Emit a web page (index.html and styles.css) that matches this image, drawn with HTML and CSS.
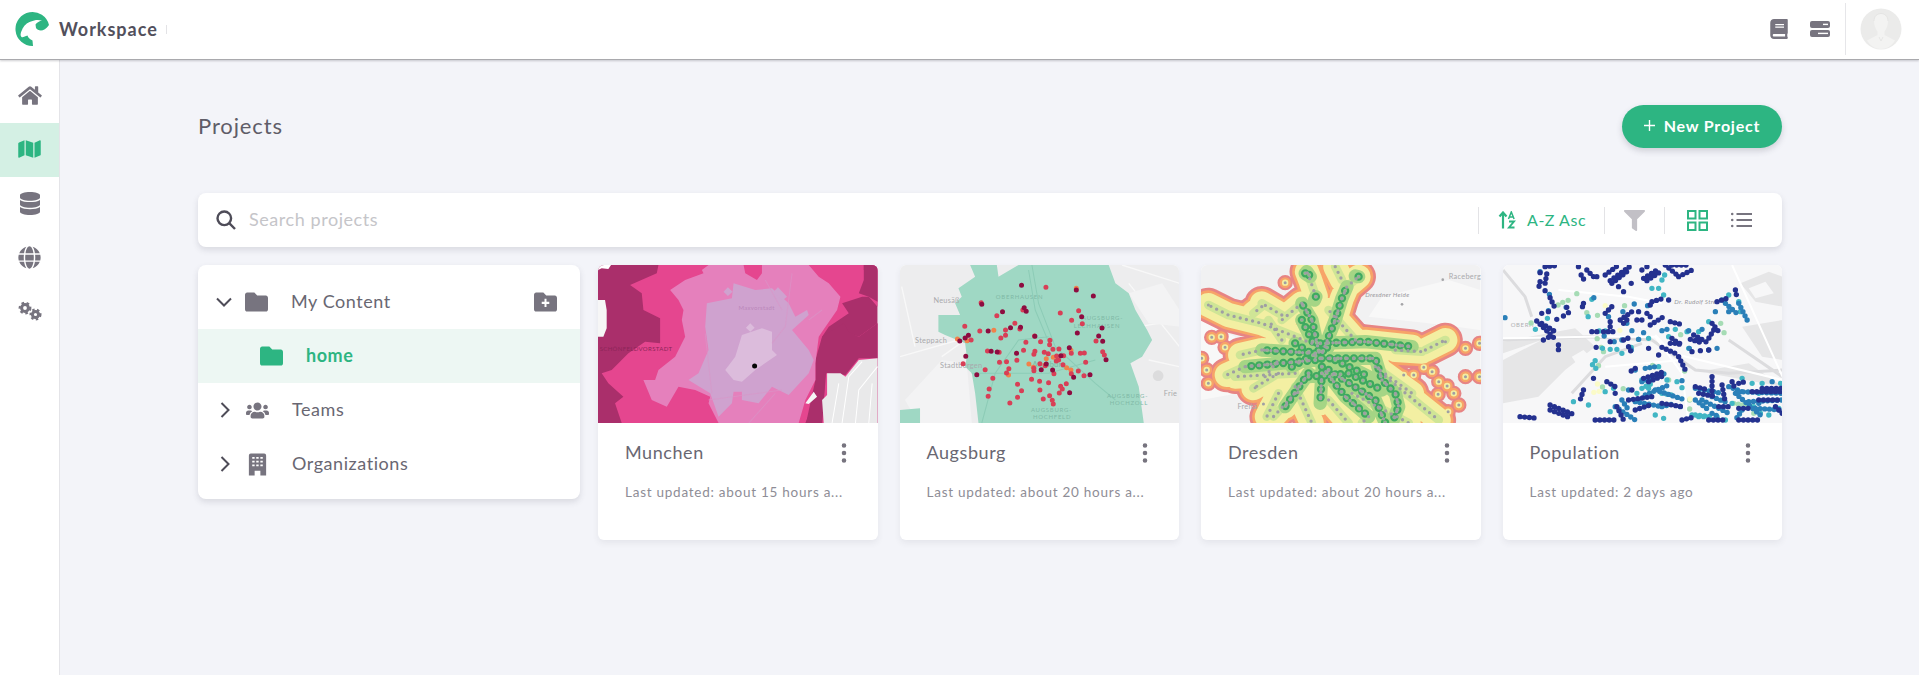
FILE: index.html
```
<!DOCTYPE html>
<html lang="en">
<head>
<meta charset="utf-8">
<title>Workspace</title>
<link rel="stylesheet" href="styles.css">
</head>
<body>
<svg class="defs" width="0" height="0" aria-hidden="true">
  <defs>
    <path id="i-folder" d="M464 128H272l-64-64H48C21.49 64 0 85.49 0 112v288c0 26.51 21.49 48 48 48h416c26.51 0 48-21.49 48-48V176c0-26.51-21.49-48-48-48z"/>
    <path id="net" d="M375 295L420 180L440 115L455 80L490 50M375 295L350 180L320 130M362 110L345 60L335 35M375 250L510 245L650 260M690 270L750 240M380 295L540 295L560 360L600 400L610 440L590 489M380 320L450 410L520 470M400 330L540 420L570 489M360 300L150 320M360 280L200 270M350 250L200 190L100 165L40 135M340 340L270 440M380 340L375 430M300 340L120 350M420 20L440 60M570 350L680 440L730 480M470 400L640 489M250 400L215 470M200 270L135 285M150 320L95 345M250 340L175 385M300 400L235 470M260 165L200 130M320 130L260 180M600 270L680 275M300 380L350 489M400 420L460 489M520 470L500 489M200 140L175 160M540 320L650 400M480 240L400 150M260 240L220 180M210 350L250 300"/>
    <path id="core" d="M375 295L420 180L440 115L455 80M375 295L350 180L320 130M375 250L510 245L650 260M380 295L540 295L560 360L600 400L610 440L590 489M380 320L450 410L520 470M400 330L540 420L570 489M360 300L150 320M360 280L200 270M340 340L270 440M380 340L375 430M300 250L380 300M320 180L360 260M290 320L400 260M340 350L470 340M420 300L520 350M460 340L560 390M330 40L345 50L335 35M490 50L480 48M362 110L358 120"/>
    <path id="rings" d="M270 68h.1M810 265h.1M790 435h.1M40 370h.1M90 262h.1M50 232h.1M78 230h.1M20 295h.1M35 330h.1M852 350h.1M852 250h.1M685 322h.1M710 335h.1M625 345h.1M655 345h.1M730 365h.1M755 378h.1M775 400h.1M728 403h.1M758 455h.1M810 350h.1M180 383h.1M205 432h.1M40 135h.1M750 245h.1"/>
  </defs>
</svg>

<header class="topbar">
  <div class="brand">
    <svg class="logo" viewBox="0 0 36 36">
      <path class="fill-green" d="M35 14A17 17 0 1 0 19 35L18.500 29.500C15 28 14 26 13.500 24.500C11 25 9 27 7.500 26C6 25 6.500 22 8 19C9.500 15 13 11.500 17 10.500C20 9 24 8.500 28 9.500C25.500 10 23 11.500 21.500 13.500L22 17C24 20 30 21.500 35 14Z"/>
    </svg>
    <span class="brand-name">Workspace</span>
    <span class="brand-tick"></span>
  </div>
  <div class="top-actions">
    <svg class="top-book" viewBox="0 0 448 512"><path class="fill-grey" d="M448 360V24c0-13.300-10.700-24-24-24H96C43 0 0 43 0 96v320c0 53 43 96 96 96h328c13.300 0 24-10.700 24-24v-16c0-7.500-3.500-14.300-8.900-18.700-4.200-15.400-4.200-59.300 0-74.700 5.400-4.300 8.900-11.100 8.900-18.600zM128 134c0-3.300 2.700-6 6-6h212c3.300 0 6 2.700 6 6v20c0 3.300-2.700 6-6 6H134c-3.300 0-6-2.700-6-6v-20zm0 64c0-3.300 2.700-6 6-6h212c3.300 0 6 2.700 6 6v20c0 3.300-2.700 6-6 6H134c-3.300 0-6-2.700-6-6v-20zm253.400 250H96c-17.700 0-32-14.300-32-32 0-17.600 14.400-32 32-32h285.400c-1.900 17.100-1.900 46.900 0 64z"/></svg>
    <svg class="top-server" viewBox="0 0 20 16">
      <rect class="fill-grey" x="0" y="0" width="20" height="7" rx="2"/>
      <rect class="fill-grey" x="0" y="9" width="20" height="7" rx="2"/>
      <rect class="fill-white" x="13" y="2.700" width="5" height="1.400"/>
      <rect class="fill-white" x="8" y="11.700" width="10" height="1.400"/>
    </svg>
    <span class="top-divider"></span>
    <svg class="avatar" viewBox="0 0 42 42">
      <circle class="avatar-bg" cx="21" cy="21" r="20.500"/>
      <path class="avatar-fg" d="M21 6c-4.500 0-7 3-7 7.500 0 4 2 8 3.500 10V27L7 32.500c3 5 8.500 8.500 14 8.500s11-3.500 14-8.500L24.500 27v-3.500C26 21.500 28 17.500 28 13.500 28 9 25.500 6 21 6z"/>
      <path class="avatar-line" d="M14 13C14 3 28 3 28 13M19 29L21 33L23 29"/>
    </svg>
  </div>
</header>

<div class="shell">
  <nav class="sidebar">
    <a class="nav-item"><svg class="nav-home" viewBox="0 0 576 512"><path class="fill-grey" d="M280.370 148.260L96 300.110V464a16 16 0 0 0 16 16l112.060-.29a16 16 0 0 0 15.920-16V368a16 16 0 0 1 16-16h64a16 16 0 0 1 16 16v95.640a16 16 0 0 0 16 16.050L464 480a16 16 0 0 0 16-16V300L295.670 148.260a12.190 12.190 0 0 0-15.300 0zM571.600 251.470L488 182.560V44.050a12 12 0 0 0-12-12h-56a12 12 0 0 0-12 12v72.610L318.470 43a48 48 0 0 0-61 0L4.340 251.470a12 12 0 0 0-1.600 16.900l25.500 31A12 12 0 0 0 45.150 301l235.220-193.740a12.190 12.190 0 0 1 15.300 0L530.900 301a12 12 0 0 0 16.900-1.600l25.500-31a12 12 0 0 0-1.700-16.930z"/></svg></a>
    <a class="nav-item nav-active"><svg class="nav-map" viewBox="0 0 576 512"><path class="fill-green" d="M0 117.660v346.320c0 11.320 11.430 19.060 21.940 14.860L160 416V32L20.120 87.950A32.006 32.006 0 0 0 0 117.660zM192 416l192 64V96L192 32v384zM554.060 33.160L416 96v384l139.880-55.950A31.996 31.996 0 0 0 576 394.340V48.020c0-11.320-11.430-19.060-21.940-14.860z"/></svg></a>
    <a class="nav-item"><svg class="nav-db" viewBox="0 0 448 512"><path class="fill-grey" d="M448 73.143v45.714C448 159.143 347.667 192 224 192S0 159.143 0 118.857V73.143C0 32.857 100.333 0 224 0s224 32.857 224 73.143zM448 176v102.857C448 319.143 347.667 352 224 352S0 319.143 0 278.857V176c48.125 33.143 136.208 48.572 224 48.572S399.874 209.143 448 176zm0 160v102.857C448 479.143 347.667 512 224 512S0 479.143 0 438.857V336c48.125 33.143 136.208 48.572 224 48.572S399.874 369.143 448 336z"/></svg></a>
    <a class="nav-item"><svg class="nav-globe" viewBox="0 0 496 512"><path class="fill-grey" d="M336.500 160C322 70.700 287.800 8 248 8s-74 62.700-88.500 152h177zM152 256c0 22.200 1.200 43.500 3.300 64h185.300c2.100-20.500 3.300-41.800 3.300-64s-1.200-43.500-3.300-64H155.300c-2.100 20.500-3.300 41.800-3.300 64zm324.700-96c-28.600-67.900-86.500-120.400-158-141.600 24.400 33.800 41.200 84.700 50 141.600h108zM177.200 18.400C105.800 39.600 47.800 92.100 19.300 160h108c8.700-56.900 25.500-107.800 49.900-141.600zM487.400 192H372.700c2.100 21 3.300 42.500 3.300 64s-1.200 43-3.300 64h114.600c5.500-20.500 8.600-41.800 8.600-64s-3.100-43.500-8.500-64zM120 256c0-21.500 1.200-43 3.300-64H8.600C3.200 212.500 0 233.800 0 256s3.200 43.500 8.600 64h114.600c-2-21-3.200-42.500-3.200-64zm39.500 96c14.500 89.300 48.700 152 88.500 152s74-62.700 88.500-152h-177zm159.300 141.600c71.400-21.200 129.400-73.700 158-141.600h-108c-8.800 56.900-25.600 107.800-50 141.600zM19.300 352c28.600 67.900 86.500 120.400 158 141.600-24.400-33.800-41.200-84.700-50-141.600h-108z"/></svg></a>
    <a class="nav-item"><svg class="nav-cogs" viewBox="0 0 24 20">
      <g class="cog"><circle cx="7" cy="7" r="3.400"/><circle class="cog-teeth" cx="7" cy="7" r="5.300"/></g>
      <g class="cog"><circle cx="17.500" cy="13.500" r="3.100"/><circle class="cog-teeth cog-teeth-b" cx="17.500" cy="13.500" r="4.900"/></g>
    </svg></a>
  </nav>

  <main class="main">
    <div class="page-head">
      <h1 class="page-title">Projects</h1>
      <button class="new-btn"><svg class="plus" viewBox="0 0 12 12"><path d="M6 0v12M0 6h12"/></svg>New Project</button>
    </div>

    <div class="toolbar">
      <svg class="search-icon" viewBox="0 0 20 20"><circle cx="8.300" cy="8.300" r="6.800"/><path d="M13.200 13.200L19 19"/></svg>
      <span class="search-ph">Search projects</span>
      <span class="tool-div"></span>
      <div class="sort">
        <svg class="sort-icon" viewBox="0 0 17 18">
          <path class="stroke-green" d="M4.500 17.500V2M1 5.500L4.500 1.500L8 5.500"/>
          <path class="stroke-green thin" d="M10 8L12.800 1L15.600 8M11 6h3.600"/>
          <path class="stroke-green mid" d="M10.500 10.500h5L10.500 16.500h5.500"/>
        </svg>
        <span class="sort-label">A-Z Asc</span>
      </div>
      <span class="tool-div div-filter"></span>
      <svg class="filter-icon" viewBox="0 0 512 512"><path d="M487.976 0H24.028C2.710 0-8.047 25.866 7.058 40.971L192 225.941V432c0 7.831 3.821 15.170 10.237 19.662l80 55.980C298.020 518.690 320 507.493 320 487.980V225.941l184.947-184.970C520.021 25.896 509.338 0 487.976 0z"/></svg>
      <span class="tool-div div-views"></span>
      <svg class="grid-icon" viewBox="0 0 21 21"><rect x="1" y="1" width="7.500" height="7.500"/><rect x="12.500" y="1" width="7.500" height="7.500"/><rect x="1" y="12.500" width="7.500" height="7.500"/><rect x="12.500" y="12.500" width="7.500" height="7.500"/></svg>
      <svg class="list-icon" viewBox="0 0 21 16"><path class="list-lines" d="M5.500 2H21M5.500 8H21M5.500 14H21"/><path class="list-dots" d="M1.200 2h0M1.200 8h0M1.200 14h0"/></svg>
    </div>

    <div class="content">
      <aside class="tree">
        <div class="tree-row">
          <svg class="chev-down" viewBox="0 0 16 10"><path d="M1 1.500L8 8.500L15 1.500"/></svg>
          <svg class="tree-icon" viewBox="0 56 512 400" preserveAspectRatio="none"><use href="#i-folder" class="fill-grey"/></svg>
          <span class="tree-label">My Content</span>
          <svg class="tree-add" viewBox="0 56 512 400" preserveAspectRatio="none"><use href="#i-folder" class="fill-grey"/><path class="add-plus" d="M256 190v168M172 274h168"/></svg>
        </div>
        <div class="tree-row tree-home">
          <svg class="tree-icon" viewBox="0 56 512 400" preserveAspectRatio="none"><use href="#i-folder" class="fill-green"/></svg>
          <span class="tree-label-home">home</span>
        </div>
        <div class="tree-row">
          <svg class="chev-right" viewBox="0 0 10 16"><path d="M1.500 1L8.500 8L1.500 15"/></svg>
          <svg class="tree-icon" viewBox="0 0 640 512"><path class="fill-grey" d="M96 224c35.300 0 64-28.700 64-64s-28.700-64-64-64-64 28.700-64 64 28.700 64 64 64zm448 0c35.300 0 64-28.700 64-64s-28.700-64-64-64-64 28.700-64 64 28.700 64 64 64zm32 32h-64c-17.600 0-33.500 7.100-45.100 18.600 40.300 22.100 68.900 62 75.100 109.400h66c17.700 0 32-14.300 32-32v-32c0-35.300-28.700-64-64-64zm-256 0c61.900 0 112-50.100 112-112S381.900 32 320 32 208 82.100 208 144s50.100 112 112 112zm76.800 32h-8.300c-20.800 10-43.900 16-68.500 16s-47.600-6-68.500-16h-8.300C179.600 288 128 339.600 128 403.200V432c0 26.500 21.500 48 48 48h288c26.500 0 48-21.500 48-48v-28.800c0-63.600-51.600-115.200-115.200-115.200zm-223.700-13.400C161.500 263.100 145.600 256 128 256H64c-35.300 0-64 28.700-64 64v32c0 17.700 14.300 32 32 32h65.900c6.300-47.400 34.900-87.300 75.200-109.400z"/></svg>
          <span class="tree-label">Teams</span>
        </div>
        <div class="tree-row">
          <svg class="chev-right" viewBox="0 0 10 16"><path d="M1.500 1L8.500 8L1.500 15"/></svg>
          <svg class="tree-icon" viewBox="0 0 24 24">
            <path class="fill-grey" d="M3 2.500a2 2 0 0 1 2-2h14a2 2 0 0 1 2 2v21h-6V18.500H9v5H3z"/>
            <path class="bld-win" d="M6.500 5h2.500M10.700 5h2.500M15 5h2.500M6.500 9h2.500M10.700 9h2.500M15 9h2.500M6.500 13h2.500M10.700 13h2.500M15 13h2.500"/>
          </svg>
          <span class="tree-label">Organizations</span>
        </div>
      </aside>

      <section class="cards">
        <article class="card">
          <svg class="thumb" viewBox="9 15 837 474" preserveAspectRatio="none">
            <rect x="9" y="15" width="837" height="474" fill="#aa2f6b"/>
            <path fill="#e5468f" d="M190 15L185 40L105 75L140 100L145 150L195 175V250L150 245L100 280L50 330L20 340L40 370L85 410L60 430L80 489H630L660 420L680 230L700 200L760 160L740 130L800 110L820 110L846 140V190L790 230L750 215L700 240L680 489H846V15H830L805 30V15Z"/>
            <path fill="#aa2f6b" d="M680 230L745 190L760 215L790 230L846 190V295H790L750 345L690 340L680 489H632L660 360V300Z"/>
            <path fill="#aa2f6b" d="M805 15H846V125L820 110L790 100L805 60Z"/>
            <path fill="#e580bc" d="M320 30L340 15H445L450 40L485 60L500 40V15H640L670 50L700 70L735 110L725 150L680 215L670 230L660 310L660 360L630 420L610 489H370L340 430L345 410L300 390L250 380L215 440L170 420L145 360L180 360L190 330L240 290L270 230L260 180L265 150L250 120L225 90L270 60L325 40Z"/>
            <path fill="#cfa2cf" d="M335 130L410 115L415 70L480 90L530 85L580 130L600 170L635 150L640 165L590 210L640 270L655 300L640 340L580 405L530 380L490 430L440 420L440 395L415 395L410 430L370 470L345 400L280 360L310 340L340 270L330 200Z"/>
            <path fill="#cfa2cf" d="M385 95L398 82L412 95L398 108ZM535 95L548 82L575 110L560 122Z"/>
            <path fill="#dcbcdc" d="M440 225L500 205L530 215L530 270L545 285L480 330L440 365L415 360L390 330L420 290ZM452 203L465 190L478 203L465 215Z"/>
            <path class="road-pink" d="M330 220L350 400M590 40L570 200L530 250M340 420L560 390M640 180L680 150M510 60L560 150M460 490L540 400"/>
            <text class="maplabel mlp" x="430" y="150">Maxvorstadt</text>
            <text class="maplabel mld" x="14" y="272">SCHÖNFELDVORSTADT</text>
            <circle cx="478" cy="318" r="7.500" fill="#050505"/>
            <path fill="#e9e9ea" d="M695 340L735 340L750 350L790 300L846 295V489H685L680 420L695 405Z"/>
            <path class="road-white" d="M740 489L760 350L800 305M780 489L790 390L846 320M710 489L730 370M820 489L830 370"/>
            <path fill="#f6f6f6" d="M9 120H30L35 150V205L25 230H9ZM630 430L655 395L665 410L640 432Z"/>
            <path fill="#fff" d="M9 15H35L48 15L40 27L20 25L9 30Z"/>
          </svg>
          <div class="card-body">
            <div class="card-head"><span class="card-title">Munchen</span><svg class="kebab" viewBox="0 0 6 20"><path d="M3 2.500h0M3 10h0M3 17.500h0"/></svg></div>
            <p class="card-meta">Last updated: about 15 hours a...</p>
          </div>
        </article>

        <article class="card">
          <svg class="thumb" viewBox="15 15 837 474" preserveAspectRatio="none">
            <rect x="15" y="15" width="837" height="474" fill="#ededee"/>
            <path class="road-grey" d="M15 290L190 240M140 290L210 240M60 260L20 80M680 15L852 70M700 70L852 260M760 300L852 320M730 200L852 180"/>
            <path fill="#f3f3f4" d="M140 300L215 310L230 489H70L30 420ZM700 100L800 70L852 150V200L760 190Z"/>
            <path fill="#9fd8c4" d="M225 15H305L310 50L370 15H640L660 70L700 100L720 150L755 210L770 240L740 290L705 310L730 380L745 489H250L240 400L230 340L210 320L215 290L210 250L150 225L130 215V165L195 165L180 130L200 110L190 85L240 50ZM15 450L75 445V489H15Z"/>
            <path class="road-teal" d="M410 15L430 130L480 260L600 370L660 420M400 30L420 150L470 270M460 230L370 240L300 340L260 489M230 340L460 340L600 300"/>
            <circle cx="788" cy="347" r="16" fill="#dcdcdd"/>
            <text class="maplabel mlg" x="115" y="128">Neusäß</text>
            <text class="maplabel mlg" x="60" y="250">Steppach</text>
            <text class="maplabel mlg" x="135" y="323">Stadtbergen</text>
            <text class="maplabel mlg" x="805" y="407">Frie</text>
            <text class="maplabel mls" x="302" y="118">OBERHAUSEN</text>
            <text class="maplabel mls" x="560" y="180">AUGSBURG-</text>
            <text class="maplabel mls" x="535" y="203">LECHHAUSEN</text>
            <text class="maplabel mls" x="635" y="413">AUGSBURG-</text>
            <text class="maplabel mls" x="643" y="436">HOCHZOLL</text>
            <text class="maplabel mls" x="407" y="455">AUGSBURG-</text>
            <text class="maplabel mls" x="413" y="478">HOCHFELD</text>
            <text class="maplabel mlm" x="412" y="322">Augsburg</text>
            <path class="dot dot-o" d="M187 237h0M216 242h0M296 211h0M543 85h0M527 271h0M453 296h0M474 292h0M401 312h0M414 322h0M514 323h0M527 330h0M450 315h0M340 345h0"/>
            <path class="dot dot-r" d="M452 82h0M258 128h0M305 167h0M383 150h0M495 159h0M550 152h0M529 181h0M561 191h0M209 199h0M254 213h0M331 210h0M331 226h0M317 234h0M359 190h0M374 207h0M228 240h0M392 247h0M436 245h0M464 241h0M463 254h0M602 243h0M277 273h0M312 277h0M385 271h0M419 274h0M416 283h0M447 277h0M459 281h0M473 268h0M491 267h0M528 280h0M555 280h0M567 279h0M622 275h0M627 285h0M313 307h0M334 305h0M365 301h0M204 311h0M270 329h0M341 326h0M334 339h0M293 355h0M416 325h0M434 311h0M505 287h0M484 288h0M490 300h0M483 303h0M571 307h0M503 314h0M549 333h0M528 341h0M566 347h0M476 341h0M409 358h0M433 364h0M460 368h0M367 373h0M513 371h0M496 379h0M501 387h0M492 399h0M434 390h0M379 392h0M282 387h0M279 409h0M367 412h0M344 429h0M444 417h0M463 407h0M471 421h0M474 432h0M416 332h0M450 317h0M418 228h0"/>
            <path class="dot dot-d" d="M379 76h0M543 90h0M594 108h0M260 133h0M322 155h0M387 143h0M393 154h0M559 170h0M220 226h0M210 234h0M194 243h0M279 213h0M346 203h0M376 202h0M546 219h0M610 228h0M622 244h0M620 204h0M419 229h0M522 263h0M288 274h0M306 276h0M364 280h0M212 289h0M497 287h0M632 299h0M245 344h0M453 312h0M438 329h0M472 330h0M535 352h0M584 344h0M523 398h0"/>
          </svg>
          <div class="card-body">
            <div class="card-head"><span class="card-title">Augsburg</span><svg class="kebab" viewBox="0 0 6 20"><path d="M3 2.500h0M3 10h0M3 17.500h0"/></svg></div>
            <p class="card-meta">Last updated: about 20 hours a...</p>
          </div>
        </article>

        <article class="card">
          <svg class="thumb" viewBox="18 15 837 474" preserveAspectRatio="none">
            <rect x="18" y="15" width="837" height="474" fill="#f1f1f2"/>
            <path fill="#f8f8f8" d="M560 110L760 60L855 90V210L700 190L520 170ZM18 180L120 230L130 400L18 420Z"/>
            <g class="heat">
              <use href="#net" class="h-red"/>
              <use href="#rings" class="r-red"/>
              <use href="#net" class="h-orange"/>
              <use href="#rings" class="r-orange"/>
              <use href="#net" class="h-yellow"/>
              <use href="#rings" class="r-yellow"/>
              <use href="#net" class="h-pale"/>
              <use href="#core" class="h-lgreen"/>
              <use href="#core" class="h-green"/>
              <use href="#core" class="h-ring"/>
              <use href="#net" class="h-grey"/>
              <use href="#rings" class="r-grey"/>
              <use href="#core" class="h-grey2"/>
            </g>
            <text class="maplabel mli" x="510" y="112">Dresdner Heide</text>
            <text class="maplabel mlg" x="760" y="58">Raceberg</text>
            <text class="maplabel mlg" x="127" y="446">Freita</text>
            <circle cx="620" cy="133" r="4" fill="#a5a5a8"/>
            <circle cx="742" cy="59" r="4" fill="#a5a5a8"/>
          </svg>
          <div class="card-body">
            <div class="card-head"><span class="card-title">Dresden</span><svg class="kebab" viewBox="0 0 6 20"><path d="M3 2.500h0M3 10h0M3 17.500h0"/></svg></div>
            <p class="card-meta">Last updated: about 20 hours a...</p>
          </div>
        </article>

        <article class="card">
          <svg class="thumb" viewBox="24 15 837 474" preserveAspectRatio="none">
            <rect x="24" y="15" width="837" height="474" fill="#f7f7f8"/>
            <path fill="#e6e6e7" d="M24 245L240 205L300 260L210 330L130 410L24 430ZM735 70L820 35L861 50V140L780 125ZM740 200L861 180V300L800 290ZM640 330L760 310L861 380L640 340ZM24 300L140 240L24 280Z"/>
            <path fill="#f7f7f8" d="M230 290L265 270L285 290L250 320ZM760 85L810 65L835 100L780 115Z"/>
            <path class="road-grey2" d="M24 240L280 230L470 240L600 330L700 340L861 330M230 400L330 290L440 250M700 240L860 350M24 30L90 110L110 170"/>
            <path class="road-w" d="M24 235L280 230L480 230L560 340L580 489M480 225L530 280L861 360M190 90L400 110L500 130M330 320L560 300M710 15L861 350"/>
            <text class="maplabel mli" x="537" y="133">Dr. Rudolf Stre</text>
            <text class="maplabel mls-g" x="47" y="202">OBERH</text>
            <path class="beads b-lg" d="M245 101h1M219 121h1M189 135h1M203 127h1M108 189h1M275 158h1M307 166h1M388 137h1M306 236h1M310 317h1M472 316h1M556 224h1M686 218h1M676 190h1M715 430L780 442M322 381h1M384 386h1M583 420h1M583 447h1M775 460h1M568 333h1M318 262h1M325 275h1M520 360h1"/>
            <path class="beads b-y" d="M330 137h1M374 211h1M307 372h1M296 397h1M312 394h1M584 417h1"/>
            <path class="beads b-t" d="M157 175h1M121 208h1M279 170h1M290 118h1M312 213h1M330 213h1M322 265h1M300 302h1M292 314h1M302 325h1M345 268h1M365 268h1M380 280h1M408 262h1M470 85h1M490 85h1M505 105h1M508 45h1M500 60h1M460 235h1M430 238h1M520 230h1M540 208h1M575 215h1M610 215h1M640 185h1M680 120h1M700 105h1M730 125h1M735 155h1M580 265h1M515 360h1M545 365h1M560 383h1M440 360h1M425 400h1M460 385h1M490 320h1M330 395h1M355 385h1M280 435h1M345 455h1M235 425h1M480 465h1M505 475h1M590 465h1M610 470h1M625 470h1M665 470h1M690 480h1M710 430h1M740 355h1M770 370h1M800 370h1M855 370h1M790 400h1M850 445h1M820 465h1M600 465L650 470M500 400L530 405M440 385L470 370M775 440L800 465"/>
            <path class="beads b-b" d="M30 173h1M135 35h1M163 103h1M160 152h1M213 142h1M296 113h1M340 170h1M417 132h1M457 137h1M383 155h1M395 190h1M410 212h1M445 218h1M357 245h1M327 228h1M380 240h1M430 238h1M500 212h1M515 208h1M580 212h1M620 208h1M660 155h1M700 155h1M730 130L760 190M690 130L730 165M665 265h1M582 265h1M640 270h1M408 270h1M420 330h1M450 325L480 320M440 365L510 340M400 390h1M450 405L520 375M480 390L570 420M420 425L500 440M560 362h1M600 385L680 400M600 420L640 450M650 410L700 430M730 395L860 400M760 425L860 420M790 430h1M780 445L860 450M740 450L720 480M650 460L670 470M380 420L400 450M360 440L420 480M500 440L540 430M555 440h1M700 380L740 395M830 365h1M620 420L700 460M720 400L800 470"/>
            <path class="beads b-d" d="M150 20L180 17M135 38h1M155 42L150 70M135 65L130 88M150 92h1M165 113L180 145M215 142h1M205 168h1M220 158h1M185 178h1M140 160h1M160 155h1M125 183L175 232M140 190L180 215M145 240h1M160 232h1M190 255V275M250 20h1M258 45L270 65M275 30L295 50M305 50h1M330 45L370 15M345 62L410 15M350 70L395 35M370 80h1M385 95h1M408 70h1M445 55L485 30M455 62L500 32M440 30h1M455 20h1M510 15L545 45M550 50L590 30M530 15H580M470 125L505 115M465 135h1M520 120h1M430 155h1M455 160L470 175M265 130h1M262 140h1M330 160L355 135M345 185L350 195M375 180L410 155M385 190L400 175M425 180h1M440 180h1M465 195L505 170M525 185L565 195M290 215h1M305 215h1M325 215L365 215M345 200h1M385 240L410 230M303 262h1M345 245h1M530 235L555 255M525 250L560 250M595 225L640 250M585 238L625 250M650 190L670 215M655 210L640 235M665 125L695 115M720 90L725 115M460 265h1M500 262L540 280M590 275h1M615 272h1M640 270h1M490 285V295M550 290L570 330M408 333h1M420 325h1M445 355L505 335M460 365L510 345M295 355h1M335 365L360 380M265 390L255 420M360 400h1M410 390h1M165 435L240 465M165 450L230 475M75 470L130 475M300 480L360 480M365 440L385 480M400 420L470 410M420 450L465 435M600 380L640 390M650 350V410M680 375L690 430M710 365L720 390M730 370L750 365M770 395L860 395M790 420L860 420M840 440L860 460M640 480H690M730 480H790M560 480L600 470M500 430L560 440M400 260L410 280M610 400L660 410M800 385L860 385M670 440H700M730 445H770"/>
          </svg>
          <div class="card-body">
            <div class="card-head"><span class="card-title">Population</span><svg class="kebab" viewBox="0 0 6 20"><path d="M3 2.500h0M3 10h0M3 17.500h0"/></svg></div>
            <p class="card-meta">Last updated: 2 days ago</p>
          </div>
        </article>
      </section>
    </div>
  </main>
</div>
</body>
</html>
```
FILE: styles.css
```
* { box-sizing: border-box; }
html, body { height: 100%; }
body {
  margin: 0;
  height: 675px;
  overflow: hidden;
  display: flex;
  flex-direction: column;
  background: #f3f4f9;
  color: #5f5d68;
  font-family: Lato, "Noto Sans", sans-serif;
  letter-spacing: .035em;
}
.defs { position: absolute; }
.fill-grey { fill: #77747f; }
.fill-green { fill: #2db582; }
.fill-white { fill: #fff; }

.topbar {
  height: 60px;
  flex: none;
  display: flex;
  align-items: center;
  justify-content: space-between;
  background: #fff;
  border-bottom: 1px solid #a9a9ad;
  box-shadow: 0 1px 2px rgba(60, 60, 70, .25);
  position: relative;
  z-index: 2;
  padding: 0 17px 1px 14px;
}
.brand { display: flex; align-items: center; }
.logo { width: 36px; height: 36px; }
.brand-name { margin-left: 9px; font-size: 18px; font-weight: 700; color: #52505c; letter-spacing: .055em; }
.brand-tick { width: 1px; height: 9px; margin-left: 8px; background: #e3e3e6; }
.top-actions { display: flex; align-items: center; }
.top-book { width: 18px; height: 20px; }
.top-server { width: 20px; height: 16px; margin-left: 22px; }
.top-divider { width: 1px; height: 52px; margin-left: 15px; background: #e6e6e9; }
.avatar { width: 42px; height: 42px; margin-left: 14px; }
.avatar-bg { fill: #ebebea; }
.avatar-fg { fill: #f3f3f2; }
.avatar-line { fill: none; stroke: #e2e2e1; stroke-width: .8; }

.shell { flex: 1; display: flex; min-height: 0; }
.sidebar {
  width: 60px;
  flex: none;
  padding-top: 9px;
  background: #fff;
  border-right: 1px solid #e4e4e8;
}
.nav-item { height: 54px; padding-bottom: 2px; display: flex; align-items: center; justify-content: center; }
.nav-active { background: #d4f0e4; }
.nav-home { width: 24px; height: 21px; }
.nav-map { width: 23px; height: 20px; }
.nav-db { width: 20px; height: 23px; }
.nav-globe { width: 23px; height: 23px; }
.nav-cogs { width: 24px; height: 20px; }
.cog circle { fill: none; stroke: #77747f; stroke-width: 3; }
.cog .cog-teeth { stroke-width: 2.200; stroke-dasharray: 2.600 2.600; }
.cog .cog-teeth-b { stroke-dasharray: 2.400 2.400; }

.main { flex: 1; min-width: 0; padding: 45px 137px 0 138px; }
.page-head { height: 43px; display: flex; align-items: center; justify-content: space-between; }
.page-title { margin: 0 0 2px; font-size: 22px; font-weight: 400; color: #5f5d68; letter-spacing: .04em; }
.new-btn {
  width: 160px;
  height: 43px;
  padding: 0 0 2px;
  display: flex;
  align-items: center;
  justify-content: center;
  border: 0;
  border-radius: 22px;
  background: #2db582;
  box-shadow: 0 3px 6px rgba(60, 60, 80, .2);
  color: #fff;
  font: 700 16px Lato, sans-serif;
  letter-spacing: .05em;
}
.plus { width: 11px; height: 11px; margin-right: 9px; }
.plus path { stroke: #fff; stroke-width: 1.500; fill: none; }

.toolbar {
  height: 54px;
  margin-top: 45px;
  display: flex;
  align-items: center;
  padding: 0 30px 0 18px;
  background: #fff;
  border-radius: 8px;
  box-shadow: 0 3px 6px rgba(60, 60, 80, .14);
}
.search-icon { width: 20px; height: 20px; }
.search-icon circle, .search-icon path { fill: none; stroke: #4e4c58; stroke-width: 2.400; }
.search-ph { flex: 1; margin: 0 0 2px 13px; font-size: 18px; color: #c5c5c9; }
.tool-div { width: 1px; height: 27px; background: #e3e3e6; }
.sort { display: flex; align-items: center; margin-left: 19px; width: 106px; }
.sort-icon { width: 18px; height: 18px; }
.stroke-green { fill: none; stroke: #2db582; stroke-width: 2.200; }
.stroke-green.thin { stroke-width: 1.500; }
.stroke-green.mid { stroke-width: 1.900; }
.sort-label { margin: 0 0 1px 11px; font-size: 16px; color: #2db582; }
.filter-icon { width: 23px; height: 21px; margin-left: 18px; }
.filter-icon path { fill: #c2c0c6; }
.div-views { margin-left: 18px; }
.grid-icon { width: 21px; height: 21px; margin-left: 22px; }
.grid-icon rect { fill: none; stroke: #2db582; stroke-width: 2; }
.list-icon { width: 21px; height: 16px; margin-left: 23px; }
.list-lines { fill: none; stroke: #77747f; stroke-width: 2; }
.list-dots { fill: none; stroke: #77747f; stroke-width: 2.600; stroke-linecap: round; }

.content { display: flex; align-items: flex-start; gap: 18px; margin-top: 18px; }
.tree {
  width: 382px;
  flex: none;
  padding: 10px 0 8px;
  background: #fff;
  border-radius: 8px;
  box-shadow: 0 3px 6px rgba(60, 60, 80, .14);
}
.tree-row { height: 54px; display: flex; align-items: center; padding-left: 18px; position: relative; }
.tree-home { background: #edf7f3; padding-left: 62px; }
.chev-down { width: 16px; height: 10px; margin-right: 13px; }
.chev-right { width: 10px; height: 16px; margin: 0 16px 0 4px; }
.chev-down path, .chev-right path { fill: none; stroke: #4e4c58; stroke-width: 2; }
.tree-icon { width: 23px; height: 23px; }
.tree-row > .tree-icon[preserveAspectRatio] { height: 20px; }
.tree-label { margin: 0 0 2px 23px; font-size: 18px; color: #696772; }
.tree-label-home { margin: 0 0 2px 23px; font-size: 18px; font-weight: 700; color: #2db582; }
.tree-add { width: 23px; height: 20px; margin-left: auto; margin-right: 23px; }
.add-plus { fill: none; stroke: #fff; stroke-width: 44; }
.bld-win { fill: none; stroke: #fff; stroke-width: 1.800; }

.cards { flex: 1; min-width: 0; display: grid; grid-template-columns: repeat(4, 1fr); gap: 22px; }
.card {
  height: 275px;
  background: #fff;
  border-radius: 6px;
  overflow: hidden;
  box-shadow: 0 3px 6px rgba(60, 60, 80, .08);
}
.thumb { display: block; width: 100%; height: 158px; }
.card-body { padding: 18px 27px 0 27px; }
.card-head { height: 24px; display: flex; align-items: center; justify-content: space-between; }
.card-title { margin-bottom: 2px; font-size: 18px; color: #696772; }
.kebab { width: 6px; height: 20px; margin-right: 4px; }
.kebab path { fill: none; stroke: #77747f; stroke-width: 4.600; stroke-linecap: round; }
.card-meta {
  margin: 18px 0 0;
  font-size: 13.5px;
  line-height: 18px;
  letter-spacing: .055em;
  color: #8e8d96;
  white-space: nowrap;
}

.maplabel { font-family: Lato, sans-serif; letter-spacing: .04em; }
.mlg { font-size: 22px; fill: #a9a9ac; }
.mls { font-size: 18px; letter-spacing: .12em; fill: #7fb9a6; }
.mls-g { font-size: 18px; letter-spacing: .1em; fill: #b0b0b3; }
.mlm { font-size: 22px; fill: #78b5a0; }
.mli { font-size: 19px; font-style: italic; fill: #9a9aa0; }
.mlp { font-size: 18px; fill: #bb88bb; }
.mld { font-size: 18px; letter-spacing: .06em; fill: #8c2558; }

.road-pink { fill: none; stroke: #d896c8; stroke-width: 3; opacity: .6; }
.road-white { fill: none; stroke: #fff; stroke-width: 3; }
.road-grey { fill: none; stroke: #f8f8f8; stroke-width: 4; }
.road-teal { fill: none; stroke: #8ccbb6; stroke-width: 3; }

.dot { fill: none; stroke-width: 15; stroke-linecap: round; }
.dot-r { stroke: #d83f56; }
.dot-d { stroke: #8e0c40; }
.dot-o { stroke: #f1814a; }

.heat use { fill: none; stroke-linecap: round; stroke-linejoin: round; }
.h-red { stroke: #e78484; stroke-width: 104; }
.h-orange { stroke: #f7a468; stroke-width: 88; }
.h-yellow { stroke: #f3efa2; stroke-width: 72; }
.h-pale { stroke: #cfe596; stroke-width: 26; }
.h-lgreen { stroke: #a5d585; stroke-width: 40; }
.h-green { stroke: #3ea960; stroke-width: 25; stroke-dasharray: 0 24; }
.h-ring { stroke: #8ccb80; stroke-width: 12; stroke-dasharray: 0 24; }
.h-grey { stroke: #9f9fa3; stroke-width: 10; stroke-dasharray: 0 19; }
.h-grey2 { stroke: #9f9fa3; stroke-width: 8; stroke-dasharray: 0 24; }
.r-red { stroke: #e78484; stroke-width: 46; }
.r-orange { stroke: #f7a468; stroke-width: 33; }
.r-yellow { stroke: #f3efa2; stroke-width: 19; }
.r-grey { stroke: #9f9fa3; stroke-width: 9; }

.road-grey2 { fill: none; stroke: #dcdcde; stroke-width: 9; }
.road-w { fill: none; stroke: #fff; stroke-width: 6; }
.beads { fill: none; stroke-width: 16; stroke-linecap: round; stroke-dasharray: 0 14; }
.b-d { stroke: #24318f; }
.b-b { stroke: #2a7fb8; }
.b-t { stroke: #41b6c4; }
.b-lg { stroke: #a6dcb5; }
.b-y { stroke: #fbfbc8; }
```
